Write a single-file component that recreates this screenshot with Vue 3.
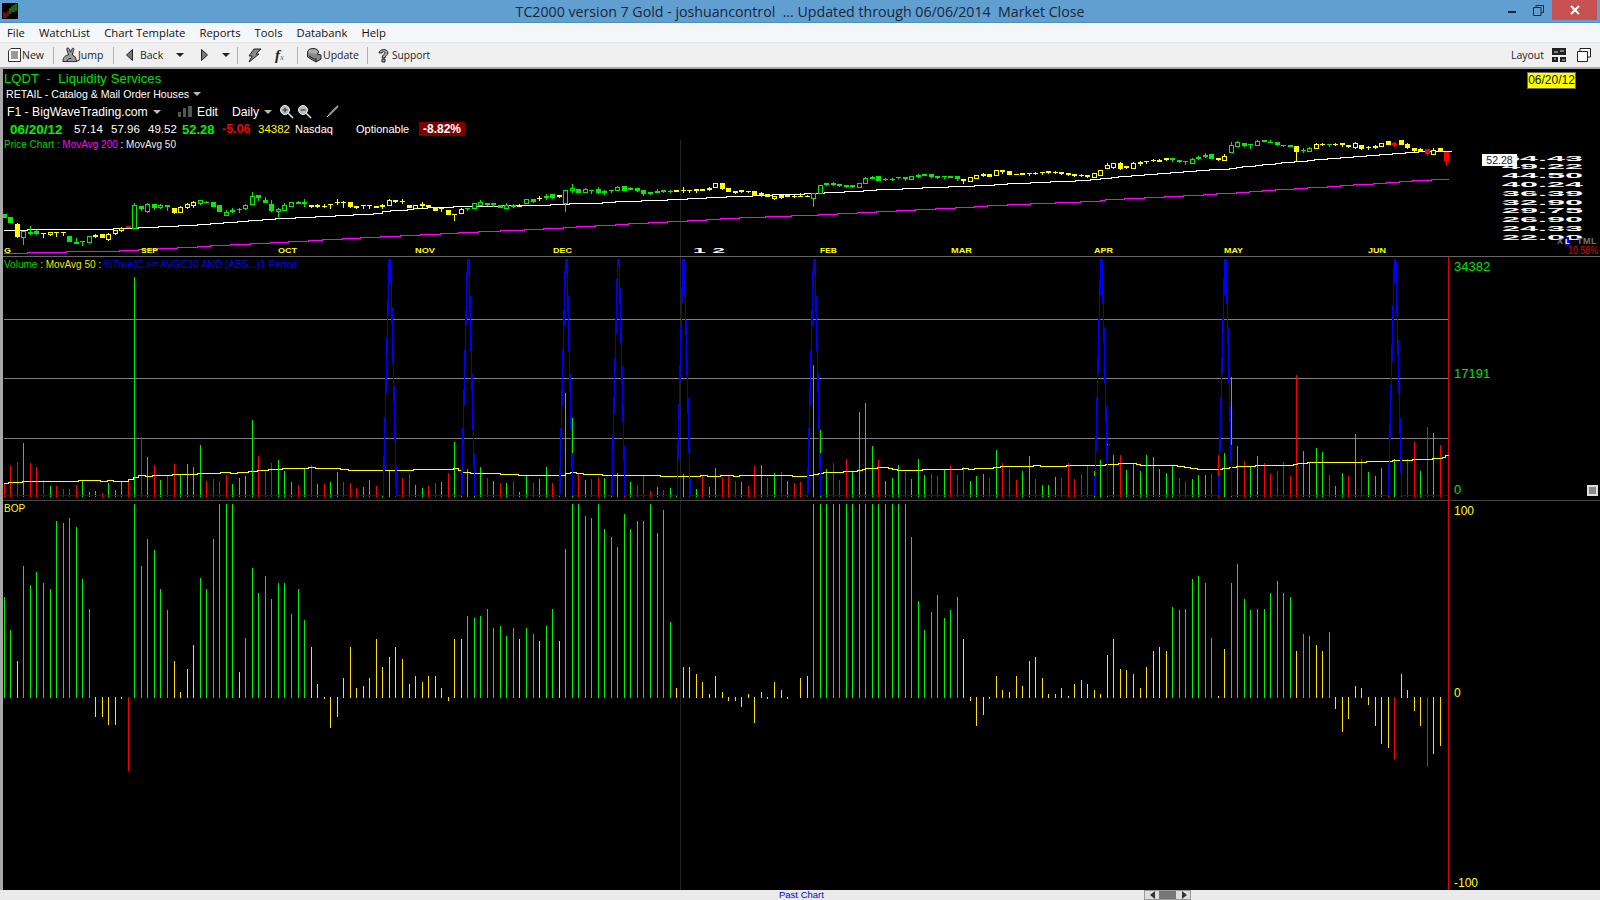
<script setup>
const barX = (i) => Math.floor(4.33 + 6.527 * i)

const candleData = [
  [140, `g1 223 235;g1 232 250;y1 252 291 295 250;g0 273 291 315;g1 275 282 285 258;g1 273 281 285 270;y1 280 283 293;y0 275 281 288;y1 277 280 291;y1 277 280 288;g1 288 305;g1 306 312 312 295;g1 302 305 317;g0 289 305;y1 285 290 294 282;y1 282 293;y0 283 296 303 280;y0 271 279 285;y0 264 271 277 260;r1 258 264;g0 196 263 265 188;g1 199 207 212;g0 193 214 218 190;g1 193 205 210;g0 196 202 206 193;g1 196 202 214;y1 205 219 223;y0 202 217 220 199;y0 193 202 207 188;y0 187 194 204 184;g0 179 189 194;g1 186 190 190 183;g1 187 201;g1 196 215;g0 217 224 224 210;g1 211 215 220 205;g1 208 211 220 204;g0 196 204 209 193;g0 169 191 196 156;g1 166 175 184;g1 181 190 190 172;g1 193 213 215 181;g0 208 214 232 205;g0 196 210 213 190;g0 187 199 202;g1 186 193 193 183;g1 187 192 200 178;y1 196 201 205;y1 196 200 205 192;y1 197 201 205 192;y1 193 196 206;y1 187 190 195 178;y1 187 190 205 184;y1 187 200 205;y1 199 203 208;y1 196 199 206;y1 196 199 206;y1 199 203;y1 196 200 208 192;y0 181 195 198 178;y1 181 185 190;y1 183 187 192 178;y1 196 204;y0 196 204;y1 193 199 205 187;y1 196 200 203;y1 202 212 214;y1 205 208 215;y1 211 226;y1 223 226 243;y0 208 220 223 205;g1 205 208 213;g0 190 205;g0 187 195 195 181;g1 190 194 199;g1 190 195 200`],
  [140, `g1 196 203;g0 196 203 206 190;g1 196 200 203 193;y1 196 200 200 193;g0 178 190;g1 178 185 190;y1 174 177 183 168;g1 169 175 179 163;g1 163 175 178;y1 166 171 175;g0 151 188 215;g0 145 151 158 133;g1 148 158;g0 148 156 158 145;g1 151 154 162;g1 148 160 162 142;g1 154 158 164 151;g1 151 154 160;g0 142 150 152 139;g1 139 152 154;g1 145 149 149 142;g1 145 152 155;g1 151 163 168;g1 157 161 164;g1 154 158 160 148;g1 151 155 158;g1 153 156 160 150;y1 151 156;y1 149 151 158 142;y1 151 153 158;y1 148 153 158;y1 148 152;y1 145 149 152 142;y0 130 140;y1 130 147 150;y1 145 156;y1 154 158 161;y1 151 155 158;y1 154 156 160;y1 154 165;y1 160 165 171 157;y1 163 170;y0 167 174 179;y1 166 174 177;y1 166 170;y1 168 171 174 164;y1 168 171 171 160;y1 168 170 171 165;g0 158 173 200;g0 136 158;g1 130 135 138;g1 130 134 137 126;g1 133 137 140;g1 136 140 144;g1 136 140 144;g0 130 140;g0 115 128 128 111;g1 112 117 117 109;g1 109 122;g1 117 121 123 114;g1 117 120 123 114;g1 112 115 118;g1 112 117 122;g0 109 116;g1 106 110 114 103;g1 103 107 109;g1 103 110 113;g1 109 113 116;g1 109 112 117;g1 109 113;g1 109 117 122;y1 118 122 131;y0 112 122;y0 106 113;y1 103 107 110 100;y1 103 110 112;y0 91 106;y1 91 97 101;y1 94 104;y1 103 106;y1 100 104;y1 100 103 108;y1 99 103 106 96;y1 96 100 104;y1 94 98 101;y1 96 100 103 92;y1 97 101 104;y1 100 104 108;y1 103 107 110;y1 105 109 112 102;y1 106 110 114;y0 100 110`],
  [130, `y0 120 136;y0 105 115 118 100;y0 100 111 117;y1 100 117 120 96;y1 109 113 117;y0 99 113 116 95;y1 97 101 107 93;y1 94 96 102;y1 90 93 96 87;y1 90 95 95 87;y1 85 89 93;g1 85 89 96;g1 91 95 98;g1 93 96 105;g0 88 98 98 85;g1 81 86 91 78;g1 75 81 84 70;g1 72 87;y1 85 89 93;y0 79 90 90 73;g0 45 66 69 37;g0 37 47 48 34;g1 39 47 51;g1 42 46 57;g0 33 45 47 30;g1 30 36;g1 36 39 39 30;g1 36 45 48;g1 45 47 51;g1 45 51;y1 48 66 94;g1 60 64 69 54;g0 54 62 62 51;y0 42 53 53 39;y1 42 45 48 39;g1 42 45 51;y1 42 45 48 39;y1 39 45 51;y1 45 50 54;y0 39 50 57 36;y1 45 57 60;y1 51 54 60 48;y1 48 53 57 44;y0 39 47 50;y1 33 45;r1 39 45 51 36;y1 30 45;y1 42 54 57 39;y1 54 63 66;y1 57 63 66 54;r1 57 72 78;y0 60 73 73 54;y1 54 67;r1 66 93 108`]
]
const candleColor = { g: '#00ee00', y: '#ffff00', r: '#ff0000' }
const candles = []
for (const [base, text] of candleData) {
  for (const item of text.split(';')) {
    const parts = item.split(' ')
    const top = Number(parts[1])
    const bot = Number(parts[2])
    const wb = parts[3] ? Number(parts[3]) : bot
    const wt = parts[4] ? Number(parts[4]) : top
    const y = (v) => Math.round(base + v / 3)
    candles.push({
      color: candleColor[parts[0][0]],
      filled: parts[0][1] === '1',
      top: y(top),
      h: Math.max(y(bot) - y(top), 1),
      wt: y(wt),
      wh: Math.max(y(wb) - y(wt), 1)
    })
  }
}
candles.forEach((c, i) => { c.x = barX(i) })

const volumes = [
  -40,-92,-104,161,-101,-89,-50,32,-32,-23,-23,-35,47,14,17,-11,41,20,44,-47,660,-179,119,-95,50,-62,-98,65,98,89,155,-47,-53,-47,-65,38,56,62,230,-122,-74,-101,110,77,44,-35,83,-95,38,-38,44,74,-44,-41,-26,29,50,-32,3,77,-2,-56,-68,35,26,-32,-41,44,-71,164,3,83,3,89,-56,47,
  -41,41,-47,14,62,-41,53,89,-41,3,311,236,-68,50,-53,-59,56,3,71,-3,44,-35,-65,-17,29,-20,26,3,68,-3,23,-65,29,86,-56,-62,-47,44,-32,-92,95,-56,71,-74,47,-41,-44,-59,395,200,83,-101,-50,-113,77,254,281,152,-110,47,56,95,-74,53,113,65,-68,-62,80,-92,-65,-89,47,62,68,-56,140,
  -101,-83,-50,77,122,-53,35,35,59,-56,-101,-53,-68,-95,77,110,158,125,-125,80,101,77,125,119,83,71,92,-56,-47,53,65,65,-68,-125,131,359,152,-107,92,122,-101,-68,-77,-104,-62,-365,137,101,146,134,-65,32,71,-62,188,-113,74,62,86,-65,113,-110,-113,-164,77,-209,191,-155
]
const volumeBars = volumes.map((v, i) => {
  const h = Math.max(Math.round(Math.abs(v) / 3), 1)
  return { x: barX(i), y: 497 - h, h, color: v >= 0 ? '#00f000' : '#ff0000' }
})

const bopText = `g302 g203 y110 g395 g338 g377 g344 g326 g530 g524 g539 g512 g356 g266 y-61 y-61 y-85 y-85 y-7 r-223 g581 g395 g476 g443 g326 g263 y110 y17 y86 y158 g359 g326 g476 g581 g581 g581 y77 g179 g389 g314 g365 g296 g344 g344 g251 g326 g233 y152 y41 y-7 y-94 y-61 y59 y152 y29 y35 y59 y176 y92 y122 y152 y116 y41 y65 y47 y65 y65 y29 y-13 y176 y176 g245 g239 g245 g266 g209
g215 g185 g209 y176 g209 g191 y170 g215 g266 y170 g446 g581 g581 g545 g539 g581 g506 g482 g452 g551 g506 g530 g530 g581 g494 g563 g227 y29 y92 y92 y71 y47 y11 y65 y17 y-13 y-13 y-31 y11 y-79 y17 y-7 y47 y23 y-7 y0 y59 y65 g581 g581 g581 g581 g581 g581 g581 g581 g581 g581 g581 g581 g581 g581 g581 g482 g290 g203 g257 g308 g239 g263 g302 y176 y-13 y-88 y-55 y-7 y65
y23 y17 y65 y35 y110 y122 y59 y11 y11 y29 y5 y41 y53 y41 y23 y11 y128 y176 y86 y83 y71 y29 y92 y140 y152 y140 g272 g263 g266 g356 g365 g344 g179 y5 y146 g344 g401 g296 g263 g266 g266 g314 g350 g314 g302 y140 g191 g185 y158 y140 g197 y-37 y-106 y-67 y35 y29 y-25 y-88 y-142 y-154 r-187 y71 y23 y-43 y-88 r-211 y-172 y-148`
const bopColor = { g: '#00f000', y: '#ffe000', r: '#ff0000' }
const bopBars = bopText.split(/\s+/).map((t, i) => {
  const v = Number(t.slice(1))
  const h = Math.round(Math.abs(v) / 3)
  return { x: barX(i), y: v >= 0 ? 698 - h : 697, h, color: bopColor[t[0]] }
}).filter((b) => b.h > 0)

const spikeCenters = [59, 71, 86, 94, 104, 124, 168, 187, 213]
let blue = 'M4 495.5'
for (const i of spikeCenters) {
  const c = 4.33 + 6.527 * i + 0.5
  blue += ` L${(c - 6.4).toFixed(1)} 495.5 L${(c - 6.2).toFixed(1)} 476 L${(c - 0.7).toFixed(1)} 260 L${(c + 0.7).toFixed(1)} 260 L${(c + 6.2).toFixed(1)} 476 L${(c + 6.4).toFixed(1)} 495.5`
}
blue += ' L1448 495.5'

function stepPath(groups, endX) {
  const pts = []
  for (const [xo, yo, list] of groups) {
    for (let k = 0; k < list.length; k += 2) {
      pts.push([xo + list[k] / 3, yo + list[k + 1] / 3])
    }
  }
  let d = `M${pts[0][0].toFixed(0)} ${Math.floor(pts[0][1]) + 0.5}`
  for (let k = 1; k < pts.length; k++) {
    d += ` H${pts[k][0].toFixed(0)} V${Math.floor(pts[k][1]) + 0.5}`
  }
  return d + ` H${endX}`
}

const whiteLine = stepPath([
  [0, 140, [12,270,80,268,340,265,380,265,415,262,475,259,535,256,590,253,630,250,670,247,710,244,745,241,785,238,825,235,885,232,945,229,1005,226,1060,223,1120,220,1145,214,1170,211,1220,208,1240,205,1280,202,1360,199]],
  [500, 140, [0,196,150,193,207,190,306,187,345,184,423,181,501,178,561,175,618,172,678,169,756,166,816,163,912,160,972,157,1032,154,1089,151,1128,148,1206,145,1266,142,1344,139,1422,136,1482,133,1522,130]],
  [1030, 140, [0,127,60,124,135,121,180,118]],
  [1100, 130, [0,145,33,142,54,139,93,136,132,133,171,130,210,127,249,124,288,121,327,118,387,115,408,112,426,109,465,106,486,103,525,100,543,97,582,94,621,91,642,88,681,85,720,82,759,79,798,76,837,73,876,70,915,67,954,64,1053,61]]
], 1451)

const magentaLine = stepPath([
  [0, 140, [12,340,80,337,198,334,357,331,414,328,471,325,531,322,591,319,630,316,690,313,750,310,810,307,864,304,924,301,966,298,1026,295,1080,292,1140,289,1200,286,1260,283,1320,280,1374,277,1434,274]],
  [500, 140, [0,271,72,268,129,265,189,262,228,259,285,256,345,253,384,250,444,247,501,244,561,241,618,238,660,235,717,232,795,229,873,226,954,223,1011,220,1071,217,1128,214,1188,211,1245,208,1305,205,1365,202,1422,199,1461,196,1521,193]],
  [1030, 140, [0,190,75,187,150,184,210,181]],
  [1100, 130, [0,211,15,208,72,205,132,202,192,199,249,196,309,193,348,190,408,187,447,184,486,181,525,178,582,175,621,172,681,169,720,166,759,163,819,160,858,157,897,154,936,151,993,148]]
], 1449)

const yellowLine = stepPath([
  [0, 400, [13,250,25,247,65,244,235,241,300,244,320,241,340,244,385,237,400,231,415,226,435,229,455,226,515,223,590,220,660,217,690,220,710,217,745,214,770,211,805,208,845,205,925,202,945,205,1020,208,1045,211,1240,208,1360,205,1375,211,1385,217,1410,220]],
  [500, 360, [0,343,55,346,195,340,210,337,228,340,250,343,305,346,480,349,600,346,620,349,660,346,700,349,717,346,875,349,925,346,940,343,955,340,970,337,1030,334,1070,331,1085,328,1095,325,1130,322,1165,325,1175,328,1190,331,1265,328,1385,325,1405,328,1422,325,1480,322]],
  [1000, 360, [0,319,100,316,120,319,198,316,315,313,355,310,408,313,420,316,530,319,552,322,570,325,590,328,665,325,688,322,708,319,765,316,880,313,890,310,920,307,1098,304,1175,301,1235,298,1295,295,1325,292,1335,286,1345,283]]
], 1448)

const gridLines = [319, 378, 438]
const priceTicks = [
  ['54.43', 158], ['49.22', 166], ['44.50', 175], ['40.24', 184], ['36.39', 193],
  ['32.90', 202], ['29.75', 210], ['26.90', 219], ['24.33', 228], ['22.00', 237]
]
const months = [
  ['G', 4, 7, 'mon'], ['SEP', 141, 17, 'mon'], ['OCT', 278, 19, 'mon'], ['NOV', 415, 20, 'mon'],
  ['DEC', 553, 19, 'mon'], ['1 2', 693, 32, 'yr'], ['FEB', 820, 17, 'mon'], ['MAR', 951, 21, 'mon'],
  ['APR', 1094, 19, 'mon'], ['MAY', 1224, 19, 'mon'], ['JUN', 1368, 18, 'mon']
]
const menus = ['File', 'WatchList', 'Chart Template', 'Reports', 'Tools', 'Databank', 'Help']
</script>

<template>
  <div class="app">
    <header class="titlebar">
      <svg class="logo" width="16" height="16" viewBox="0 0 16 16">
        <rect width="16" height="16" fill="#000" />
        <path d="M2 15V9M4 15V10M6 13V8" stroke="#d8201c" stroke-width="1" />
        <path d="M8 11V5M10 9V3M12 9V2M14 8V1" stroke="#40c020" stroke-width="1" />
      </svg>
      <div class="title">TC2000 version 7 Gold - joshuancontrol&nbsp; ... Updated through 06/06/2014&nbsp; Market Close</div>
      <div class="winbtns">
        <span class="min"></span>
        <svg class="restore" width="11" height="11" viewBox="0 0 11 11"><path d="M3 2.5V.5H10.5V7.5H8M.5 2.5H8V10.5H.5Z" fill="none" stroke="#1c2b3a" /></svg>
        <span class="close">
          <svg width="10" height="10" viewBox="0 0 10 10"><path d="M1 1L9 9M9 1L1 9" stroke="#fff" stroke-width="2" /></svg>
        </span>
      </div>
    </header>

    <nav class="menubar">
      <span v-for="m in menus" :key="m">{{ m }}</span>
    </nav>

    <div class="toolbar">
      <svg class="ic new" width="13" height="14" viewBox="0 0 13 14"><path d="M3 .5H12.5V13.5H.5V3Z" fill="#fff" stroke="#333" /><path d="M3 4H10M3 6H10M3 8H10M3 10H10" stroke="#333" /></svg>
      <span class="lbl w-new">New</span>
      <i class="sep s1"></i>
      <svg class="ic jump" width="16" height="16" viewBox="0 0 17 16"><path d="M1 15C1 10 4 8 7 8L5 2C5 0 7 0 8 2L9 5 11 1C13 0 13 2 12 4L11 8 14 10 15 13 16 15Z" fill="#999" stroke="#222" /><path d="M5 15C6 12 8 11 10 12" fill="none" stroke="#222" /></svg>
      <span class="lbl w-jump">Jump</span>
      <i class="sep s2"></i>
      <svg class="ic back" width="7" height="12" viewBox="0 0 7 12"><path d="M6.5 .5V11.5L.5 6Z" fill="#777" stroke="#222" /></svg>
      <span class="lbl w-back">Back</span>
      <svg class="ic caret c1" width="8" height="4" viewBox="0 0 8 4"><path d="M0 0H8L4 4Z" fill="#222" /></svg>
      <svg class="ic fwd" width="7" height="12" viewBox="0 0 7 12"><path d="M.5 .5V11.5L6.5 6Z" fill="#777" stroke="#222" /></svg>
      <svg class="ic caret c2" width="8" height="4" viewBox="0 0 8 4"><path d="M0 0H8L4 4Z" fill="#222" /></svg>
      <i class="sep s3"></i>
      <svg class="ic bolt" width="15" height="15" viewBox="0 0 15 15"><path d="M7 1H14L9 6H12L2 14 5 8H2Z" fill="#888" stroke="#222" /></svg>
      <span class="fx">f<small>x</small></span>
      <i class="sep s4"></i>
      <svg class="ic upd" width="16" height="15" viewBox="0 0 16 15"><ellipse cx="7" cy="4" rx="5.5" ry="3.5" fill="#aaa" stroke="#222" /><path d="M1.5 5V9L10 14 15 11V7L11 6" fill="#888" stroke="#222" /><path d="M3 8L10 12M10 14V10" stroke="#222" fill="none" /></svg>
      <span class="lbl w-upd">Update</span>
      <i class="sep s5"></i>
      <svg class="ic help" width="11" height="15" viewBox="0 0 11 15"><path d="M1 5C1 1 10 0 10 5 10 7 7 7 7 10H4C4 7 7 6 7 5 7 3 4 4 4 5ZM4 11H7V14H4Z" fill="#aaa" stroke="#222" /></svg>
      <span class="lbl sup">Support</span>
      <span class="spacer"></span>
      <span class="lbl">Layout</span>
      <svg class="ic lay" width="14" height="14" viewBox="0 0 14 14"><path d="M0 0H14V7H0ZM0 9H6V14H0ZM8 9H14V14H8Z" fill="#222" /><path d="M2 4H6M8 3H12M2 11H4M10 12H13" stroke="#ddd" /></svg>
      <svg class="ic win" width="14" height="14" viewBox="0 0 14 14"><path d="M3 3V.5H13.5V9H10.5M.5 3.5H10.5V13.5H.5Z" fill="#fff" stroke="#222" /></svg>
    </div>

    <main class="chart">
      <i class="strip"></i>
      <svg class="plot" width="1600" height="821" viewBox="0 69 1600 821">
        <g shape-rendering="crispEdges">
          <rect x="680" y="140" width="1" height="750" fill="#222" />
          <rect x="3" y="256" width="1597" height="1" fill="#666" />
          <rect x="3" y="500" width="1597" height="1" fill="#444" />
          <rect v-for="g in gridLines" :key="g" x="4" :y="g" width="1444" height="1" fill="#808080" />
          <rect x="1448" y="257" width="1" height="633" fill="#e00000" />

          <template v-for="(b, i) in volumeBars" :key="'v' + i">
            <rect :x="b.x" :y="b.y" width="1" :height="b.h" :fill="b.color" />
          </template>
          <template v-for="(b, i) in bopBars" :key="'b' + i">
            <rect :x="b.x" :y="b.y" width="1" :height="b.h" :fill="b.color" />
          </template>
          <path :d="magentaLine" fill="none" stroke="#ff00ff" />
          <path :d="whiteLine" fill="none" stroke="#fff" />
          <path :d="yellowLine" fill="none" stroke="#ffff00" />
          <template v-for="(c, i) in candles" :key="'c' + i">
            <rect :x="c.x" :y="c.wt" width="1" :height="c.wh" :fill="c.color" />
            <rect v-if="c.filled" :x="c.x - 2" :y="c.top" width="5" :height="c.h" :fill="c.color" />
            <rect v-else :x="c.x - 1.5" :y="c.top + 0.5" width="4" :height="c.h" fill="#000" :stroke="c.color" />
          </template>
          <path :d="blue" fill="none" stroke="#0000f8" stroke-width="1.4" />
        </g>

        <text v-for="m in months" :key="m[0]" :x="m[1]" y="253" :textLength="m[2]" lengthAdjust="spacingAndGlyphs" :class="m[3]">{{ m[0] }}</text>
        <text v-for="t in priceTicks" :key="t[0]" x="1502" :y="t[1] + 3" textLength="81" lengthAdjust="spacingAndGlyphs" class="tick">{{ t[0] }}</text>

        <text x="1454" y="271" class="vol">34382</text>
        <text x="1454" y="378" class="vol">17191</text>
        <text x="1454" y="494" class="vol">0</text>
        <text x="1454" y="515" class="yl">100</text>
        <text x="1454" y="697" class="yl">0</text>
        <text x="1454" y="887" class="yl">-100</text>
        <text x="4" y="512" class="small bopl">BOP</text>
        <text x="1557" y="244" class="xl">X</text>
        <rect x="1565" y="237" width="4" height="9" fill="#0000ff" />
        <text x="1565" y="244" class="xlw">L</text>
        <text x="1577" y="244" class="xl">T</text>
        <text x="1583" y="244" class="xl">M</text>
        <text x="1591" y="244" class="xl">L</text>
        <text x="1568" y="254" class="pct" textLength="30" lengthAdjust="spacingAndGlyphs">10.58%</text>
      </svg>

      <div class="head">
        <div class="r1">LQDT&nbsp; -&nbsp; Liquidity Services</div>
        <div class="r2">RETAIL - Catalog &amp; Mail Order Houses<b class="car w"></b></div>
        <div class="r3">
          <span class="w-f1">F1 - BigWaveTrading.com</span><b class="car g1"></b>
          <svg class="bars" width="14" height="11" viewBox="0 0 14 11"><path d="M0 6H3V11H0ZM5 2H8V11H5ZM10 0H14V11H10Z" fill="#555" /></svg>
          <span class="edit">Edit</span>
          <span class="daily">Daily</span><b class="car g2"></b>
          <svg class="mag m1" width="15" height="15" viewBox="0 0 15 15"><circle cx="6" cy="6" r="4.5" fill="#bbb" stroke="#eee" /><path d="M3.5 6H8.5M6 3.5V8.5" stroke="#222" /><path d="M9 9L14 14" stroke="#ddd" stroke-width="1.6" /></svg>
          <svg class="mag m2" width="15" height="15" viewBox="0 0 15 15"><circle cx="6" cy="6" r="4.5" fill="#bbb" stroke="#eee" /><path d="M3.5 6H8.5" stroke="#222" /><path d="M9 9L14 14" stroke="#ddd" stroke-width="1.6" /></svg>
          <svg class="pen" width="13" height="13" viewBox="0 0 13 13"><path d="M12 1L3 10" stroke="#999" stroke-width="2" /><path d="M3 10L1 12" stroke="#eee" /></svg>
        </div>
        <div class="r4">
          <span class="date">06/20/12</span>
          <span class="v1">57.14</span>
          <span class="v1">57.96</span>
          <span class="v3">49.52</span>
          <span class="close-v">52.28</span>
          <span class="chg">-5.06</span>
          <span class="volu">34382</span>
          <span class="nas">Nasdaq</span>
          <span class="opt">Optionable</span>
          <span class="pctbox">-8.82%</span>
        </div>
        <div class="r5"><span class="gr">Price Chart :</span> <span class="ma">MovAvg 200</span> <span class="wh">: MovAvg 50</span></div>
      </div>
      <div class="volhead"><span class="gr">Volume</span> <span class="ye">: MovAvg 50 :</span> <span class="bl">%True(C &gt;= AVGC10 AND (ABS...)1 Period</span></div>
      <div class="datebox">06/20/12</div>
      <div class="lastbox">52.28</div>
      <i class="sq"></i>
    </main>

    <footer class="status">
      <span class="past">Past Chart</span>
      <div class="scroll"><i class="arr l"></i><i class="thumb"></i><i class="arr r"></i></div>
    </footer>
  </div>
</template>

<style scoped>
.app { width: 1600px; height: 900px; display: flex; flex-direction: column; overflow: hidden; background: #f0f0f0; font-family: "Noto Sans", "Liberation Sans", sans-serif; }

.titlebar { height: 23px; box-sizing: border-box; background: #619fd0; border-bottom: 1px solid #4f8dbf; display: flex; align-items: center; position: relative; flex: none; }
.logo { margin-left: 2px; }
.title { position: absolute; left: 0; right: 0; text-align: center; font-size: 14.2px; color: #16283a; font-family: "Open Sans", sans-serif; top: 2px; }
.winbtns { margin-left: auto; display: flex; align-items: flex-start; height: 100%; }
.min { width: 8px; height: 2px; background: #1c2b3a; margin-top: 11px; margin-right: 17px; }
.restore { margin-top: 5px; margin-right: 8px; }
.close { width: 45px; height: 20px; background: #c75050; display: flex; align-items: center; justify-content: center; margin-right: 3px; }

.menubar { height: 20px; box-sizing: border-box; background: #f5f6f8; display: flex; align-items: center; gap: 14px; padding-left: 7px; font-family: "Open Sans", sans-serif; font-size: 11.3px; color: #111; flex: none; border-bottom: 1px solid #e4e4e4; }

.toolbar { height: 26px; box-sizing: border-box; background: #f0f0f0; display: flex; align-items: center; padding-left: 8px; font-family: "Open Sans", sans-serif; font-size: 10.5px; color: #222; border-bottom: 2px solid #a8a8a8; flex: none; }
.lbl { white-space: nowrap; }
.sup { font-size: 10.2px; }
.ic { flex: none; }
.new { margin-right: 1px; }
.w-new { width: 22px; }
.sep { width: 1px; height: 17px; background: #b0b0b0; flex: none; }
.s1 { margin: 0 8px 0 9px; }
.w-jump { width: 26px; }
.s2 { margin: 0 12px 0 9px; }
.w-back { width: 24px; margin-left: 7px; }
.c1 { margin-left: 12px; }
.fwd { margin-left: 17px; }
.c2 { margin-left: 14px; }
.s3 { margin: 0 9px 0 7px; }
.fx { font-family: "Liberation Serif", serif; font-style: italic; font-weight: 700; font-size: 15px; margin-left: 13px; width: 13px; flex: none; }
.fx small { font-size: 8px; color: #888; }
.s4 { margin: 0 8px 0 9px; }
.upd { margin-right: 1px; }
.w-upd { width: 36px; }
.s5 { margin: 0 10px 0 8px; }
.help { margin-right: 3px; }
.spacer { flex: 1; }
.lay { margin-left: 8px; }
.win { margin: 0 9px 0 11px; }

.chart { position: relative; height: 821px; background: #000; flex: none; overflow: hidden; }
.strip { position: absolute; left: 0; top: 0; width: 3px; height: 100%; background: #a8a8a8; }
.plot { display: block; }
.plot text { font-family: "Liberation Sans", sans-serif; }
.plot .mon { fill: #ffff00; font-size: 8px; font-weight: 700; }
.plot .yr { fill: #fff; font-size: 8px; font-weight: 700; }
.plot .tick { fill: #fff; font-size: 8px; font-weight: 700; }
.plot .vol { fill: #00e000; font-size: 13px; }
.plot .yl { fill: #ffff00; font-size: 12px; }
.plot .small { font-size: 10px; }
.plot .bopl { fill: #ffff00; }
.plot .xl { fill: #777; font-size: 9px; font-weight: 700; }
.plot .xlw { fill: #fff; font-size: 8px; font-weight: 700; }
.plot .pct { fill: #e00000; font-size: 10px; }

.head { position: absolute; left: 0; top: 0; font-family: "Liberation Sans", sans-serif; color: #fff; white-space: nowrap; }
.r1 { height: 19px; line-height: 19px; padding-left: 4px; color: #00e000; font-size: 13px; letter-spacing: 0.1px; }
.r2 { height: 13px; line-height: 13px; padding-left: 6px; font-size: 10.6px; }
.r3 { height: 21px; display: flex; align-items: center; padding-left: 7px; font-size: 12.2px; }
.r4 { height: 14px; display: flex; align-items: center; padding-left: 10px; font-size: 11.5px; }
.r5 { height: 18px; line-height: 18px; padding-left: 4px; font-size: 10px; }
.car { display: inline-block; width: 0; height: 0; border-left: 4px solid transparent; border-right: 4px solid transparent; border-top: 4px solid #bbb; flex: none; }
.car.w { margin-left: 4px; vertical-align: 2px; }
.w-f1 { width: 141px; flex: none; }
.g1 { margin-left: 5px; }
.bars { margin-left: 17px; flex: none; }
.edit { margin-left: 5px; width: 21px; flex: none; }
.daily { margin-left: 14px; width: 27px; flex: none; }
.g2 { margin-left: 5px; }
.m1 { margin-left: 7px; }
.m2 { margin-left: 3px; }
.pen { margin-left: 14px; }
.date { color: #00f000; font-weight: 700; font-size: 13.5px; width: 64px; }
.v1 { width: 37px; }
.v3 { width: 34px; }
.close-v { color: #00f000; font-weight: 700; font-size: 13px; width: 40px; }
.chg { color: #f00000; font-weight: 700; font-size: 12.5px; width: 36px; }
.volu { color: #ffff00; width: 37px; }
.nas { width: 61px; font-size: 11px; }
.opt { width: 63px; font-size: 11px; }
.pctbox { background: #800000; font-weight: 700; font-size: 12px; width: 46px; height: 14px; line-height: 14px; text-align: center; }
.gr { color: #00d000; }
.ma { color: #ff00ff; }
.wh { color: #eee; }
.ye { color: #e8e800; }
.bl { color: #0000ff; }

.volhead { position: absolute; left: 4px; top: 190px; font-family: "Liberation Sans", sans-serif; font-size: 10px; line-height: 12px; white-space: nowrap; }
.datebox { position: absolute; left: 1527px; top: 3px; width: 49px; height: 17px; box-sizing: border-box; border: 1px solid #666; background: #ffff00; color: #111; font-family: "Liberation Sans", sans-serif; font-size: 12px; line-height: 15px; text-align: center; }
.lastbox { position: absolute; left: 1482px; top: 85px; width: 35px; height: 12px; background: #fff; color: #223; font-family: "Liberation Sans", sans-serif; font-size: 10.5px; line-height: 12px; text-align: center; }
.sq { position: absolute; left: 1587px; top: 416px; width: 11px; height: 11px; box-sizing: border-box; background: #888; border: 2px solid #ddd; }

.status { height: 10px; background: #eaeaea; position: relative; flex: none; }
.past { position: absolute; left: 779px; top: -2px; font-family: "Liberation Sans", sans-serif; font-size: 9.5px; line-height: 13px; color: #0000e8; }
.scroll { position: absolute; left: 1144px; top: 0; width: 47px; height: 10px; display: flex; background: #ddd; box-sizing: border-box; border: 1px solid #999; }
.arr { width: 14px; position: relative; display: block; }
.arr.l::after, .arr.r::after { content: ""; position: absolute; top: 0; border-top: 4px solid transparent; border-bottom: 4px solid transparent; }
.arr.l::after { left: 5px; border-right: 5px solid #333; }
.arr.r::after { left: 6px; border-left: 5px solid #333; }
.thumb { flex: 1; background: #777; display: block; }
</style>
